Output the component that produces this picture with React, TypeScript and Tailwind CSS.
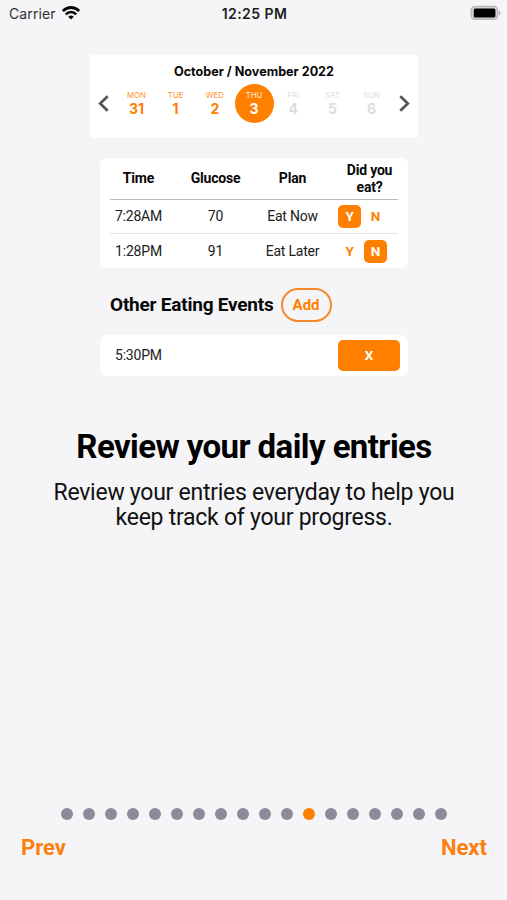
const days = [
  { name: "MON", date: 31 },
  { name: "TUE", date: 1 },
  { name: "WED", date: 2 },
  { name: "THU", date: 3 },
  { name: "FRI", date: 4 },
  { name: "SAT", date: 5 },
  { name: "SUN", date: 6 },
];
const TODAY = 3;

const entries = [
  { time: "7:28AM", glucose: 70, plan: "Eat Now", ate: true },
  { time: "1:28PM", glucose: 91, plan: "Eat Later", ate: false },
];

const PAGES = 18;
const CURRENT = 11;

function StatusBar() {
  return (
    <header className="grid h-[28px] grid-cols-3 items-center pr-[7px] pl-[8px] font-['Inter',sans-serif]">
      <div className="flex items-center gap-[6px]">
        <span className="text-[14px] leading-none tracking-[0.12px] text-[#303033]">Carrier</span>
        <svg width="18" height="14" viewBox="0 0 18 14" className="-mt-[2px]" fill="none" stroke="#050505">
          <path d="M.8 5.1C5.4.3 12.6.3 17.2 5.1" strokeWidth="2.8" />
          <path d="M3.8 8.3c3-3 7.4-3 10.4 0" strokeWidth="2.5" />
          <path d="M6.2 10.7Q9 8.5 11.8 10.7L9 13.6Z" fill="#050505" stroke="none" />
        </svg>
      </div>
      <span className="text-center text-[14px] font-semibold leading-none tracking-[0.45px] whitespace-nowrap text-[#202022]">12:25 PM</span>
      <svg width="32" height="16" viewBox="0 0 32 16" className="-mt-[2px] -mr-[2px] justify-self-end">
        <rect x="1.2" y="1.4" width="26.6" height="13" rx="4" fill="#d0d0d1" stroke="#b9b9bb" strokeWidth="1.4" />
        <rect x="3.8" y="3.5" width="21.6" height="9" rx="1.6" fill="#000" />
        <path d="M29 5.4q3.4 2.5 0 5z" fill="#b3b3b5" />
      </svg>
    </header>
  );
}

function Chevron({ flip = false }: { flip?: boolean }) {
  return (
    <svg width="11" height="17" viewBox="0 0 11 17" className={flip ? "rotate-180" : ""} fill="none" stroke="#4d565c" strokeWidth="2.7">
      <path d="M9.7 1.2 2.2 8.5l7.5 7.3" />
    </svg>
  );
}

function Calendar() {
  return (
    <section className="mx-auto mt-[27px] h-[83px] w-[328px] rounded-[2px] bg-white pt-[9px] font-['Inter',sans-serif]">
      <h2 className="text-center text-[12.6px] font-bold leading-[16px] text-[#080808]">October / November 2022</h2>
      <div className="mt-[4px] flex items-center justify-between px-[8px]">
        <Chevron />
        <div className="flex">
          {days.map((d, i) => (
            <div key={d.name} className="flex w-[39.2px] justify-center">
              <div
                className={
                  "flex size-[39px] flex-col items-center rounded-full pt-[7px] " +
                  (i === TODAY ? "bg-[#ff7f00] text-white" : i < TODAY ? "text-[#ff7f00]" : "text-[#dcdcdc]")
                }
              >
                <span className="text-[7.8px] leading-[9px] opacity-85">{d.name}</span>
                <span className="text-[14px] font-bold leading-[17px]">{d.date}</span>
              </div>
            </div>
          ))}
        </div>
        <Chevron flip />
      </div>
    </section>
  );
}

function Choice({ label, on }: { label: string; on: boolean }) {
  return (
    <span
      className={
        "flex size-[23px] items-center justify-center rounded-[5px] text-[13.5px] font-bold " +
        (on ? "bg-[#ff7f00] text-white" : "text-[#ff7f00]")
      }
    >
      {label}
    </span>
  );
}

function Entries() {
  return (
    <section className="mx-auto mt-[20px] h-[110px] w-[308px] rounded-[7px] bg-white px-[10px] text-[14px] tracking-[-0.2px] text-[#202020]">
      <div className="-mx-[10px] grid h-[41px] grid-cols-4 items-center text-center font-bold leading-[17px] text-[#080808]">
        <span>Time</span>
        <span>Glucose</span>
        <span>Plan</span>
        <span>
          Did you
          <br />
          eat?
        </span>
      </div>
      {entries.map((e, i) => (
        <div key={e.time} className={i === 0 ? "h-[34px] border-t-[1.5px] border-[#b8b8b8]" : "h-[35px] border-t border-[#e4e4e6]"}>
          <div className="-mx-[10px] grid h-full grid-cols-4 items-center text-center">
            <span>{e.time}</span>
            <span>{e.glucose}</span>
            <span>{e.plan}</span>
            <div className="flex gap-[3px] pl-[7px]">
              <Choice label="Y" on={e.ate} />
              <Choice label="N" on={!e.ate} />
            </div>
          </div>
        </div>
      ))}
    </section>
  );
}

export default function App() {
  return (
    <main className="flex h-[900px] w-[507px] flex-col bg-[#f5f5f8] pl-px font-['Roboto',sans-serif]">
      <StatusBar />
      <Calendar />
      <Entries />
      <div className="mx-auto mt-[20px] flex h-[34px] w-[308px] items-center gap-[7px] pl-[10px]">
        <h2 className="text-[19px] font-bold tracking-[-0.22px] whitespace-nowrap text-[#080808]">Other Eating Events</h2>
        <button className="h-[34px] w-[51px] rounded-full border-2 border-[#f8892a] text-[15px] font-bold text-[#ff7f00]">Add</button>
      </div>
      <section className="mx-auto mt-[13px] flex h-[41px] w-[308px] items-center justify-between rounded-[7px] bg-white pr-[8px] pl-[15px] text-[14px] tracking-[-0.2px] text-[#202020]">
        <span>5:30PM</span>
        <button className="h-[31px] w-[62px] rounded-[5px] bg-[#ff7f00] text-[13.5px] font-bold text-white">X</button>
      </section>
      <h1 className="mt-[51px] text-center text-[33px] font-bold leading-[40px] tracking-[-0.58px] whitespace-nowrap text-black">Review your daily entries</h1>
      <p className="mt-[14px] text-center text-[23px] leading-[24.5px] tracking-[-0.26px] whitespace-nowrap text-[#111]">
        Review your entries everyday to help you
        <br />
        keep track of your progress.
      </p>
      <footer className="mt-auto pb-[38px]">
        <div className="flex justify-center gap-[10px]">
          {Array.from({ length: PAGES }, (_, i) => (
            <span key={i} className={"size-[12px] rounded-full " + (i === CURRENT ? "bg-[#ff7f00]" : "bg-[#8b8b99]")} />
          ))}
        </div>
        <nav className="mt-[14px] flex justify-between px-[20px] text-[22px] font-bold leading-[28px] text-[#fb8010]">
          <button>Prev</button>
          <button>Next</button>
        </nav>
      </footer>
    </main>
  );
}
